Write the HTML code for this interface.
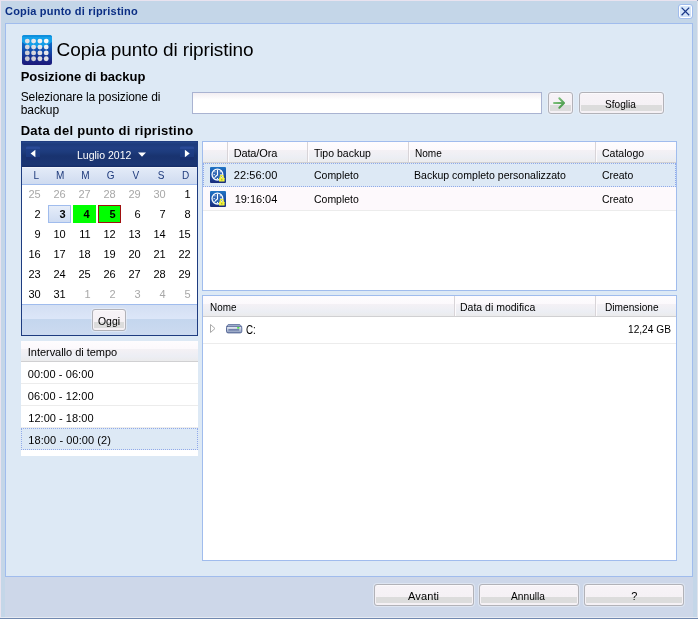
<!DOCTYPE html>
<html><head><meta charset="utf-8">
<style>
*{box-sizing:border-box;margin:0;padding:0}
html,body{width:698px;height:619px;overflow:hidden;background:#c4d6e8;font-family:"Liberation Sans",sans-serif;font-size:11px;color:#000}
.a{position:absolute}
.t{position:absolute;white-space:nowrap;line-height:20px;height:20px;transform-origin:0 0}
#win{position:absolute;left:0;top:0;width:698px;height:619px;background:#c4d6e8;overflow:hidden}
.btn{position:absolute;height:22px;border:1px solid #b2b2b8;border-radius:3px;background:linear-gradient(#f7f3f7 0,#f5f1f5 12px,#dcdcdc 12px,#dcdcdc 18px,#f5f1f5 18px);box-shadow:inset 1px 0 0 #f6f2f6,inset -1px 0 0 #f6f2f6,inset 0 1px 0 #fcfafc,0 0 0 1px rgba(240,244,250,0.5)}
.box{position:absolute;background:#fff;border:1px solid #a0bced}
.hdr{position:absolute;left:0;right:0;top:0;background:linear-gradient(#fefcfe 0,#fcf9fc 38%,#f4f1f5 40%,#eceef4 78%,#ebebec 100%);border-bottom:1px solid #d0d0d2}
.vs{position:absolute;top:0;width:2px;background:linear-gradient(90deg,#d8d4d8 50%,#fdfbfd 50%)}
.hl{position:absolute;left:0;right:0;height:1px;background:#ececec}
.navb{position:absolute;top:4px;width:14px;height:15px;background:linear-gradient(#1d3b80 0,#294a98 1px,#284894 3px,#1f3f88 3px,#1c3a80 11px,#182f70 11px,#182f70 14px,#1a3474 14px);border-radius:2px}
.cellsel{position:absolute;background:linear-gradient(#e6edf9,#cfdcf2);border:1px solid #a0bced}
</style></head><body>
<div id="win">
<div class="a" style="left:0;top:0;width:698px;height:1px;background:#e9e3ef"></div>
<div class="a" style="left:0;top:0;width:1px;height:619px;background:#e9e3ef"></div>
<div class="a" style="left:5px;top:23px;width:688px;height:554px;background:#dde9f5;border:1px solid #a0bced"></div>
<div class="a" style="left:5px;top:577px;width:688px;height:40px;background:#cdd7e9"></div>
<div class="a" style="left:697px;top:0;width:1px;height:619px;background:#dfe3ec"></div><div class="a" style="left:697px;top:0;width:1px;height:1px;background:#8a98b4"></div>
<div class="a" style="left:0;top:617px;width:698px;height:1px;background:#e6eaf2"></div><div class="a" style="left:0;top:618px;width:698px;height:1px;background:#7088b0"></div>
<!-- close -->
<div class="a" style="left:678px;top:4px;width:15px;height:15px;border:1px solid #a0bced;border-radius:3px;background:linear-gradient(#d9e8fb,#cfe1f8);box-shadow:inset 0 0 0 1px #fff"><svg width="13" height="13" viewBox="0 0 13 13" style="position:absolute;left:0;top:0"><path d="M2.6 2.6L10.2 10.2M10.2 2.6L2.6 10.2" stroke="#1a3788" stroke-width="1.25" fill="none"/></svg></div>
<!-- icon -->
<svg class="a" style="left:22px;top:35px" width="30" height="30" viewBox="0 0 30 30">
<defs><linearGradient id="ig" x1="0" y1="0" x2="0" y2="1"><stop offset="0" stop-color="#0d86d4"/><stop offset="0.4" stop-color="#0f5cbc"/><stop offset="0.75" stop-color="#162f90"/><stop offset="1" stop-color="#1c187a"/></linearGradient>
<linearGradient id="idg" gradientUnits="userSpaceOnUse" x1="3" y1="27" x2="27" y2="3"><stop offset="0" stop-color="#c2c2ca"/><stop offset="0.5" stop-color="#e0dfe4"/><stop offset="1" stop-color="#ffffff"/></linearGradient>
<clipPath id="icp"><rect x="0" y="0" width="30" height="30" rx="2.5"/></clipPath></defs>
<rect x="0" y="0" width="30" height="30" rx="2.5" fill="url(#ig)"/>
<ellipse cx="15" cy="-8" rx="22" ry="20.5" fill="#16a8ee" opacity="0.85" clip-path="url(#icp)"/>
<rect x="0" y="0" width="30" height="2" fill="#0a7cd0" opacity="0.5" clip-path="url(#icp)"/>
<g fill="url(#idg)"><circle cx="5.3" cy="6.1" r="2.45"/><circle cx="11.6" cy="6.1" r="2.45"/><circle cx="17.9" cy="6.1" r="2.45"/><circle cx="24.2" cy="6.1" r="2.45"/><circle cx="5.3" cy="12.1" r="2.45"/><circle cx="11.6" cy="12.1" r="2.45"/><circle cx="17.9" cy="12.1" r="2.45"/><circle cx="24.2" cy="12.1" r="2.45"/><circle cx="5.3" cy="17.9" r="2.45"/><circle cx="11.6" cy="17.9" r="2.45"/><circle cx="17.9" cy="17.9" r="2.45"/><circle cx="24.2" cy="17.9" r="2.45"/><circle cx="5.3" cy="23.8" r="2.45"/><circle cx="11.6" cy="23.8" r="2.45"/><circle cx="17.9" cy="23.8" r="2.45"/><circle cx="24.2" cy="23.8" r="2.45"/></g></svg>
<!-- input + buttons -->
<div class="a" style="left:192px;top:92px;width:350px;height:22px;background:linear-gradient(#f2eef2,#fff 7px);border:1px solid #a9b3d1"></div>
<div class="btn" style="left:548px;top:92px;width:25px"><svg class="a" style="left:-1px;top:-1px" width="25" height="22" viewBox="0 0 25 22"><defs><linearGradient id="ag" x1="0" y1="0" x2="1" y2="1"><stop offset="0" stop-color="#8fcc8c"/><stop offset="1" stop-color="#3f9440"/></linearGradient></defs><path d="M6 11H15.5M11.3 6.2L16 11L11.3 15.8" stroke="url(#ag)" stroke-width="2" fill="none" stroke-linecap="round" stroke-linejoin="round"/></svg></div>
<div class="btn" style="left:579px;top:92px;width:85px"></div>
<!-- calendar -->
<div class="a" style="left:21px;top:141px;width:177px;height:195px;border:1px solid #1e3c80;background:#fff">
 <div class="a" style="left:0;top:0;width:175px;height:25px;background:linear-gradient(#26468c 0,#1d3b7c 2px,#213f84 6px,#1d3b7c 10px,#19336f 14px,#1b3674 23px,#142a64 25px)">
  <div class="navb" style="left:4px"><svg class="a" style="left:0;top:0" width="15" height="15"><path d="M9.4 3.7V11.3L4.6 7.5Z" fill="#fff"/></svg></div>
  <div class="navb" style="left:158px"><svg class="a" style="left:0;top:0" width="15" height="15"><path d="M4.9 3.7V11.3L9.7 7.5Z" fill="#fff"/></svg></div>
  <svg class="a" style="left:116px;top:10px" width="9" height="6"><path d="M0 0.5H8L4 4.8Z" fill="#fff"/></svg>
 </div>
 <div class="a" style="left:0;top:25px;width:175px;height:18px;background:linear-gradient(#e3ebf8,#cfdbf0);border-bottom:1px solid #a0bced;border-top:1px solid #f0f4fb"></div>
 <div class="cellsel" style="left:26px;top:63px;width:23px;height:18px"></div>
 <div class="a" style="left:51px;top:63px;width:23px;height:18px;background:#00ff00"></div>
 <div class="a" style="left:76px;top:63px;width:23px;height:18px;background:#00ff00;border:1px solid #a01010"></div>
 <div class="a" style="left:0;top:162px;width:175px;height:31px;border-top:1px solid #a0bced;background:linear-gradient(#d3dff3,#dce6f8 45%,#c4d6ee 48%,#ccdaf0)">
  <div class="btn" style="left:70px;top:4px;width:34px"></div>
 </div>
</div>
<!-- interval list -->
<div class="a" style="left:21px;top:341px;width:177px;height:115px;background:#fff">
 <div class="hdr" style="height:21px"></div>
 <div class="hl" style="top:42px"></div><div class="hl" style="top:64px"></div>
 <div class="hl" style="top:86px"></div><div class="a" style="left:0;top:87px;width:177px;height:22px;background:#dde9f5;border:1px dotted #90a9ea"></div>
</div>
<!-- table 1 -->
<div class="box" style="left:202px;top:141px;width:475px;height:150px">
 <div class="hdr" style="height:21px"></div>
 <div class="vs" style="left:24px;height:20px"></div><div class="vs" style="left:104px;height:20px"></div><div class="vs" style="left:205px;height:20px"></div><div class="vs" style="left:392px;height:20px"></div>
 <div class="a" style="left:0;top:21px;width:473px;height:24px;background:#dde9f5;border:1px dotted #90a9ea"></div>
 <div class="a" style="left:0;top:45px;width:473px;height:24px;background:#fdf9fc;border-bottom:1px solid #ececec"></div>
 <svg class="a" style="left:7px;top:25px" width="16" height="16" viewBox="0 0 16 16"><use href="#clk"/></svg>
 <svg class="a" style="left:7px;top:49px" width="16" height="16" viewBox="0 0 16 16"><use href="#clk"/></svg>
</div>
<!-- table 2 -->
<div class="box" style="left:202px;top:295px;width:475px;height:266px">
 <div class="hdr" style="height:21px"></div>
 <div class="vs" style="left:251px;height:20px"></div><div class="vs" style="left:392px;height:20px"></div>
 <div class="hl" style="top:47px"></div>
 <svg class="a" style="left:6px;top:27px" width="8" height="11"><path d="M1.5 1.5L6 5.5L1.5 9.5Z" fill="#fff" stroke="#aaaaaa" stroke-width="1"/></svg>
 <svg class="a" style="left:23px;top:28px" width="17" height="10" viewBox="0 0 17 10"><defs><linearGradient id="dg" x1="0" y1="0" x2="0" y2="1"><stop offset="0" stop-color="#eef1f7"/><stop offset="0.45" stop-color="#c3cde0"/><stop offset="1" stop-color="#8494b8"/></linearGradient></defs><path d="M2.2 0.5H13.8L15.8 2.6H0.4Z" fill="#aebbd6" stroke="#5c6e9c" stroke-width="0.8"/><rect x="0.5" y="2.3" width="15.3" height="6.6" rx="1.6" fill="url(#dg)" stroke="#4c5e90" stroke-width="0.9"/><path d="M2.4 5.9H13.2" stroke="#40548c" stroke-width="1"/><rect x="11.2" y="3.2" width="2.2" height="1.3" fill="#2fe21c"/></svg>
</div>
<svg width="0" height="0" style="position:absolute"><defs><linearGradient id="cg" x1="0" y1="0" x2="0" y2="1"><stop offset="0" stop-color="#1f74c4"/><stop offset="0.5" stop-color="#1c4fa4"/><stop offset="1" stop-color="#1a2c7c"/></linearGradient><g id="clk"><rect x="0" y="0" width="16" height="16" rx="1" fill="url(#cg)"/><circle cx="7.4" cy="7.6" r="5.4" fill="#2f66b4" stroke="#f4f8fe" stroke-width="1.3"/><path d="M7.4 7.6A5.4 5.4 0 0 1 7.4 2.2Z" fill="#e8f0fb" opacity="0.35"/><path d="M7.5 2.8V8L5.2 9.8" stroke="#fff" stroke-width="1.1" fill="none"/><g fill="#fff"><rect x="3.6" y="7.1" width="1.2" height="1"/><rect x="4.4" y="4.3" width="1" height="1"/><rect x="9.8" y="4.3" width="1" height="1"/><rect x="10.4" y="7.1" width="1.2" height="1"/><rect x="7" y="11" width="1" height="1.2"/><rect x="4.4" y="10" width="1" height="1"/></g><path d="M10.3 11V9.8a1.5 1.5 0 0 1 3 0V11" stroke="#f2f23a" stroke-width="1.3" fill="none"/><rect x="9" y="10.8" width="5.6" height="3.8" rx="0.5" fill="#f4f43c"/><rect x="11.3" y="11.8" width="1" height="1.6" fill="#9a9a30"/></g></defs></svg>
<!-- bottom buttons -->
<div class="btn" style="left:374px;top:584px;width:100px"></div>
<div class="btn" style="left:479px;top:584px;width:100px"></div>
<div class="btn" style="left:584px;top:584px;width:100px"></div>
<div class="a" style="left:0;top:0;width:698px;height:619px;will-change:transform">
<span class="t" style="top:1.00px;left:5.00px;font-size:11px;font-weight:bold;color:#0b2e84;letter-spacing:0.209px">Copia punto di ripristino</span>
<span class="t" style="top:40.00px;left:56.60px;font-size:19px;letter-spacing:-0.110px">Copia punto di ripristino</span>
<span class="t" style="top:67.00px;left:20.70px;font-size:13px;font-weight:bold;letter-spacing:-0.018px">Posizione di backup</span>
<span class="t" style="top:87.00px;left:20.70px;font-size:12px;letter-spacing:-0.119px">Selezionare la posizione di</span>
<span class="t" style="top:100.00px;left:20.70px;font-size:12px;letter-spacing:-0.064px">backup</span>
<span class="t" style="top:121.00px;left:20.70px;font-size:13px;font-weight:bold;letter-spacing:0.261px">Data del punto di ripristino</span>
<span class="t" style="top:94.00px;left:604.60px;font-size:11px;transform:scaleX(0.9184)">Sfoglia</span>
<span class="t" style="top:145.00px;left:77.20px;font-size:11px;color:#fff;transform:scaleX(0.9548)">Luglio 2012</span>
<span class="t" style="top:311.00px;left:97.80px;font-size:11px;transform:scaleX(0.9477)">Oggi</span>
<span class="t" style="top:342.00px;left:27.80px;font-size:11px;letter-spacing:-0.031px">Intervallo di tempo</span>
<span class="t" style="top:364.00px;left:27.80px;font-size:11px;letter-spacing:0.074px">00:00 - 06:00</span>
<span class="t" style="top:386.00px;left:27.80px;font-size:11px;letter-spacing:0.074px">06:00 - 12:00</span>
<span class="t" style="top:408.00px;left:28.30px;font-size:11px;letter-spacing:0.032px">12:00 - 18:00</span>
<span class="t" style="top:430.00px;left:28.30px;font-size:11px;letter-spacing:0.083px">18:00 - 00:00 (2)</span>
<span class="t" style="top:143.00px;left:233.70px;font-size:11px;letter-spacing:-0.144px">Data/Ora</span>
<span class="t" style="top:143.00px;left:313.50px;font-size:11px;transform:scaleX(0.9546)">Tipo backup</span>
<span class="t" style="top:143.00px;left:414.70px;font-size:11px;transform:scaleX(0.9136)">Nome</span>
<span class="t" style="top:143.00px;left:602.30px;font-size:11px;transform:scaleX(0.9564)">Catalogo</span>
<span class="t" style="top:165.00px;left:233.70px;font-size:11px;letter-spacing:0.114px">22:56:00</span>
<span class="t" style="top:165.00px;left:313.50px;font-size:11px;transform:scaleX(0.9519)">Completo</span>
<span class="t" style="top:165.00px;left:413.70px;font-size:11px;transform:scaleX(0.9586)">Backup completo personalizzato</span>
<span class="t" style="top:165.00px;left:601.50px;font-size:11px;transform:scaleX(0.9484)">Creato</span>
<span class="t" style="top:189.00px;left:234.70px;font-size:11px;letter-spacing:-0.029px">19:16:04</span>
<span class="t" style="top:189.00px;left:313.50px;font-size:11px;transform:scaleX(0.9519)">Completo</span>
<span class="t" style="top:189.00px;left:601.50px;font-size:11px;transform:scaleX(0.9484)">Creato</span>
<span class="t" style="top:297.00px;left:209.60px;font-size:11px;transform:scaleX(0.8999)">Nome</span>
<span class="t" style="top:297.00px;left:460.40px;font-size:11px;transform:scaleX(0.9542)">Data di modifica</span>
<span class="t" style="top:297.00px;left:604.80px;font-size:11px;transform:scaleX(0.9230)">Dimensione</span>
<span class="t" style="top:320.00px;left:245.80px;font-size:12px;transform:scaleX(0.8143)">C:</span>
<span class="t" style="top:319.00px;left:627.70px;font-size:11px;transform:scaleX(0.9233)">12,24 GB</span>
<span class="t" style="top:586.00px;left:408.00px;font-size:11px;letter-spacing:0.134px">Avanti</span>
<span class="t" style="top:586.00px;left:510.50px;font-size:11px;transform:scaleX(0.9261)">Annulla</span>
<span class="t" style="top:586.00px;left:631.20px;font-size:11px">?</span>
<span class="t" style="top:166.00px;left:33.50px;font-size:10px;color:#1f3b7c">L</span>
<span class="t" style="top:166.00px;left:56.00px;font-size:10px;color:#1f3b7c">M</span>
<span class="t" style="top:166.00px;left:81.20px;font-size:10px;color:#1f3b7c">M</span>
<span class="t" style="top:166.00px;left:106.80px;font-size:10px;color:#1f3b7c">G</span>
<span class="t" style="top:166.00px;left:132.50px;font-size:10px;color:#1f3b7c">V</span>
<span class="t" style="top:166.00px;left:157.80px;font-size:10px;color:#1f3b7c">S</span>
<span class="t" style="top:166.00px;left:182.00px;font-size:10px;color:#1f3b7c">D</span>
<span class="t" style="top:184.00px;left:28.38px;font-size:11px;color:#a8a8a8">25</span>
<span class="t" style="top:184.00px;left:53.38px;font-size:11px;color:#a8a8a8">26</span>
<span class="t" style="top:184.00px;left:78.38px;font-size:11px;color:#a8a8a8">27</span>
<span class="t" style="top:184.00px;left:103.38px;font-size:11px;color:#a8a8a8">28</span>
<span class="t" style="top:184.00px;left:128.38px;font-size:11px;color:#a8a8a8">29</span>
<span class="t" style="top:184.00px;left:153.38px;font-size:11px;color:#a8a8a8">30</span>
<span class="t" style="top:184.00px;left:184.50px;font-size:11px">1</span>
<span class="t" style="top:204.00px;left:34.50px;font-size:11px">2</span>
<span class="t" style="top:204.00px;left:59.50px;font-size:11px;font-weight:bold">3</span>
<span class="t" style="top:204.00px;left:83.50px;font-size:11px;font-weight:bold">4</span>
<span class="t" style="top:204.00px;left:109.50px;font-size:11px;font-weight:bold">5</span>
<span class="t" style="top:204.00px;left:134.50px;font-size:11px">6</span>
<span class="t" style="top:204.00px;left:159.50px;font-size:11px">7</span>
<span class="t" style="top:204.00px;left:184.50px;font-size:11px">8</span>
<span class="t" style="top:224.00px;left:34.50px;font-size:11px">9</span>
<span class="t" style="top:224.00px;left:53.38px;font-size:11px">10</span>
<span class="t" style="top:224.00px;left:79.20px;font-size:11px">11</span>
<span class="t" style="top:224.00px;left:103.38px;font-size:11px">12</span>
<span class="t" style="top:224.00px;left:128.38px;font-size:11px">13</span>
<span class="t" style="top:224.00px;left:153.38px;font-size:11px">14</span>
<span class="t" style="top:224.00px;left:178.38px;font-size:11px">15</span>
<span class="t" style="top:244.00px;left:28.38px;font-size:11px">16</span>
<span class="t" style="top:244.00px;left:53.38px;font-size:11px">17</span>
<span class="t" style="top:244.00px;left:78.38px;font-size:11px">18</span>
<span class="t" style="top:244.00px;left:103.38px;font-size:11px">19</span>
<span class="t" style="top:244.00px;left:128.38px;font-size:11px">20</span>
<span class="t" style="top:244.00px;left:153.38px;font-size:11px">21</span>
<span class="t" style="top:244.00px;left:178.38px;font-size:11px">22</span>
<span class="t" style="top:264.00px;left:28.38px;font-size:11px">23</span>
<span class="t" style="top:264.00px;left:53.38px;font-size:11px">24</span>
<span class="t" style="top:264.00px;left:78.38px;font-size:11px">25</span>
<span class="t" style="top:264.00px;left:103.38px;font-size:11px">26</span>
<span class="t" style="top:264.00px;left:128.38px;font-size:11px">27</span>
<span class="t" style="top:264.00px;left:153.38px;font-size:11px">28</span>
<span class="t" style="top:264.00px;left:178.38px;font-size:11px">29</span>
<span class="t" style="top:284.00px;left:28.38px;font-size:11px">30</span>
<span class="t" style="top:284.00px;left:53.38px;font-size:11px">31</span>
<span class="t" style="top:284.00px;left:84.50px;font-size:11px;color:#a8a8a8">1</span>
<span class="t" style="top:284.00px;left:109.50px;font-size:11px;color:#a8a8a8">2</span>
<span class="t" style="top:284.00px;left:134.50px;font-size:11px;color:#a8a8a8">3</span>
<span class="t" style="top:284.00px;left:159.50px;font-size:11px;color:#a8a8a8">4</span>
<span class="t" style="top:284.00px;left:184.50px;font-size:11px;color:#a8a8a8">5</span>
</div>
</div>
</body></html>
